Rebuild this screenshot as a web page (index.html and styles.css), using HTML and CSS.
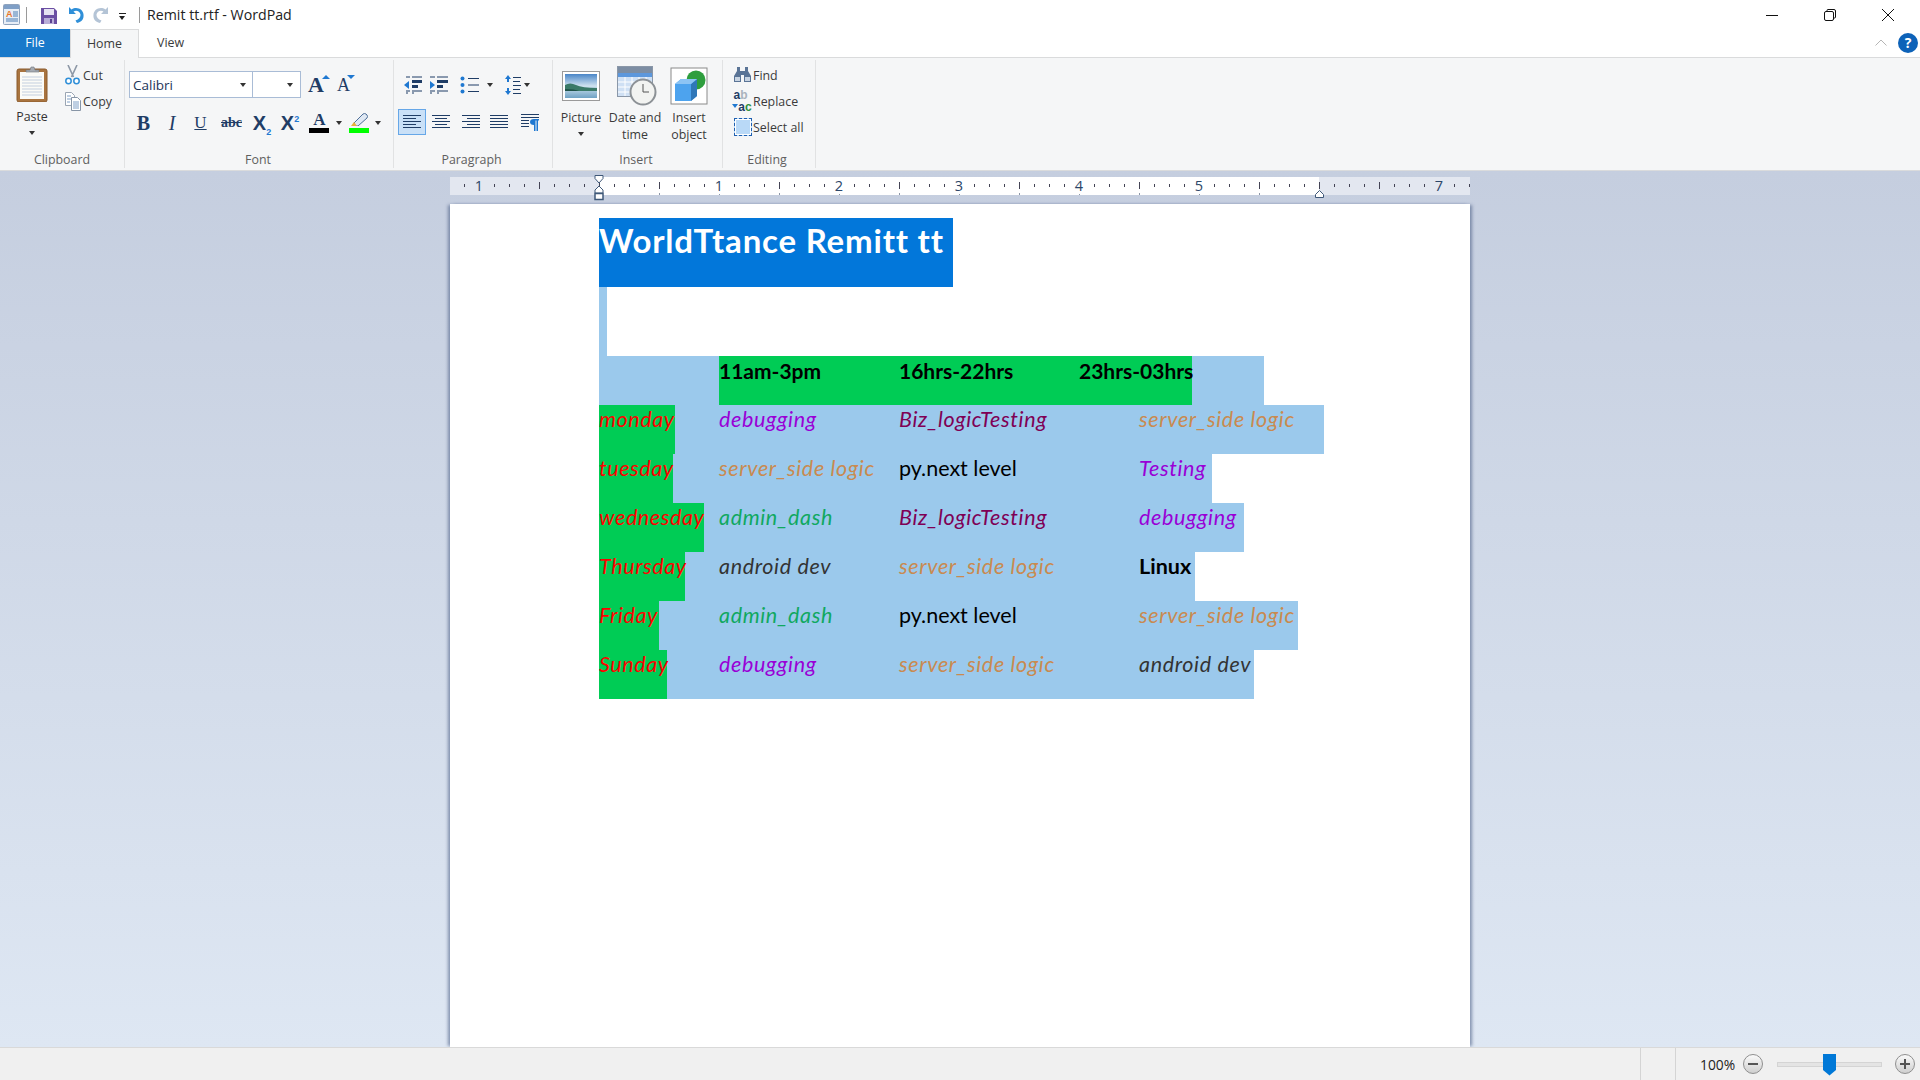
FILE: index.html
```html
<!DOCTYPE html>
<html lang="en">
<head>
    <meta charset="UTF-8">
    <title>Remit tt.rtf - WordPad</title>
    <link rel="stylesheet" href="styles.css">
</head>
<body>

<div class="titlebar">
    <svg class="app-icon" width="17" height="21" viewBox="0 0 17 21">
        <rect x="0.5" y="0.5" width="16" height="20" rx="1" fill="#e8eef6" stroke="#8fa3bd"/>
        <rect x="1" y="1" width="15" height="4" fill="#7f9fc6"/>
        <text x="3" y="13" font-size="9" font-weight="700" fill="#e8782a" font-family="Liberation Sans">A</text>
        <path d="M10 8h5M10 10h5M10 12h5M3 15h12M3 17h12" stroke="#4d7fb5"/>
    </svg>
    <span class="qa-sep"></span>
    <svg class="qa-save" width="16" height="16" viewBox="0 0 16 16">
        <path d="M0 0h13l3 3v13H0z" fill="#6b4fa3"/>
        <rect x="3" y="1" width="10" height="6" fill="#e6e2f2"/>
        <rect x="3" y="10" width="10" height="6" fill="#b9aed8"/>
        <rect x="9" y="11" width="2" height="4" fill="#5a4190"/>
    </svg>
    <svg class="qa-undo" width="16" height="17" viewBox="0 0 16 17">
        <path d="M1 1v7h7L5.500 5.500C8 3.800 12 5 12.500 8.500 12.800 11 11 13.500 7.500 14.500L9 17c5-1 7-4.500 6.500-8.500C15 3.500 9 0 3.500 3.500z" fill="#2f8fd8"/>
    </svg>
    <svg class="qa-redo" width="16" height="17" viewBox="0 0 16 17">
        <path d="M15 1v7H8l2.500-2.500C8 3.800 4 5 3.500 8.500 3.200 11 5 13.500 8.500 14.500L7 17c-5-1-7-4.500-6.500-8.500C1 3.500 7 0 12.500 3.500z" fill="#b4c4d6"/>
    </svg>
    <span class="qa-more"></span>
    <span class="qa-sep qa-sep-last"></span>
    <span class="window-title">Remit tt.rtf - WordPad</span>
    <div class="window-controls">
        <svg width="12" height="12" viewBox="0 0 12 12"><path d="M0 6.500h12" stroke="#111"/></svg>
        <svg width="12" height="12" viewBox="0 0 12 12"><path d="M3 2.500V1.500q0-1 1-1h6q1.500 0 1.500 1.500v6q0 1-1 1h-1" fill="none" stroke="#111"/><rect x="0.500" y="2.500" width="9" height="9" rx="1.500" fill="none" stroke="#111"/></svg>
        <svg width="12" height="12" viewBox="0 0 12 12"><path d="M0 0l12 12M12 0L0 12" stroke="#111"/></svg>
    </div>
</div>

<div class="tabs">
    <span class="tab tab-file">File</span>
    <span class="tab tab-home">Home</span>
    <span class="tab tab-view">View</span>
    <svg class="collapse" width="12" height="7" viewBox="0 0 12 7"><path d="M0.500 6.500L6 1l5.500 5.500" fill="none" stroke="#b5b5b5"/></svg>
    <span class="help">?</span>
</div>

<div class="ribbon">
    <div class="group group-clipboard">
        <div class="group-body clipboard-body">
            <div class="paste">
                <svg width="32" height="36" viewBox="0 0 32 36">
                    <rect x="1" y="3" width="30" height="33" rx="2" fill="#a9743f" stroke="#8a5a2c"/>
                    <rect x="4" y="6" width="24" height="27" fill="#fbfbf7"/>
                    <path d="M6 11h20M6 14h20M6 17h20M6 20h20M6 23h20M6 26h20M6 29h20" stroke="#c3cfdf"/>
                    <path d="M10 6V4h4l1-3h3l1 3h4v2z" fill="#a5abb3" stroke="#6f757d" stroke-width="0.600"/>
                </svg>
                <span class="paste-label">Paste</span>
                <span class="caret"></span>
            </div>
            <div class="small-tools">
                <div class="small-tool">
                    <span class="small-icon">
                        <svg width="15" height="20" viewBox="0 0 15 20">
                            <path d="M3 0l5.500 12M12 0L6.500 12" stroke="#8d98a6" stroke-width="1.600" fill="none"/>
                            <circle cx="3.500" cy="16" r="2.700" fill="#fff" stroke="#2f8fd8" stroke-width="1.500"/>
                            <circle cx="11.500" cy="16" r="2.700" fill="#fff" stroke="#2f8fd8" stroke-width="1.500"/>
                        </svg>
                    </span>
                    Cut
                </div>
                <div class="small-tool">
                    <span class="small-icon">
                        <svg width="16" height="19" viewBox="0 0 16 19">
                            <path d="M0.500 0.500h6l3 3v10h-9z" fill="#fff" stroke="#9aa5b3"/>
                            <path d="M6.500 5.500h6l3 3v10h-9z" fill="#fff" stroke="#8795a6"/>
                            <path d="M2 4h4M2 7h4M2 10h3M8 10h6M8 12h6M8 14h6M8 16h6" stroke="#7f9fc6"/>
                        </svg>
                    </span>
                    Copy
                </div>
            </div>
        </div>
        <div class="group-label">Clipboard</div>
    </div>

    <div class="group group-font">
        <div class="group-body tool-rows">
            <div class="tool-row font-row">
                <span class="select select-name">Calibri<span class="caret"></span></span>
                <span class="select select-size"><span class="caret"></span></span>
                <span class="grow-font">A<i class="wedge wedge-up"></i></span>
                <span class="shrink-font">A<i class="wedge wedge-down"></i></span>
            </div>
            <div class="tool-row format-row">
                <span class="fmt fmt-bold">B</span>
                <span class="fmt fmt-italic">I</span>
                <span class="fmt fmt-under">U</span>
                <span class="fmt fmt-strike">abc</span>
                <span class="fmt fmt-script">X<sub>2</sub></span>
                <span class="fmt fmt-script">X<sup>2</sup></span>
                <span class="fmt fmt-color">A<i class="color-bar bar-black"></i></span>
                <span class="caret caret-tool"></span>
                <span class="fmt fmt-marker">
                    <svg width="19" height="13" viewBox="0 0 19 13"><path d="M4 10L13 1q1.500-1 3 0l1 1q1 1.500 0 3L8 13H4z" fill="#dfe8f3" stroke="#4f6f98"/><path d="M1 13l3-4 3 4z" fill="#e8b23a"/></svg>
                    <i class="color-bar bar-green"></i>
                </span>
                <span class="caret caret-tool"></span>
            </div>
        </div>
        <div class="group-label">Font</div>
    </div>

    <div class="group group-paragraph">
        <div class="group-body tool-rows">
            <div class="tool-row para-row-top">
                <svg class="ic-outdent" width="20" height="18" viewBox="0 0 20 18">
                    <path d="M1 9l5-4v8z" fill="#1f78d1"/>
                    <path d="M3 1h4M3 15h4M3 17h2M9 1h10M9 15h10M9 17h2" stroke="#1f3d66"/>
                    <rect x="9" y="4" width="10" height="3" fill="#1f3d66"/><rect x="9" y="9" width="6" height="3" fill="#1f3d66"/>
                </svg>
                <svg class="ic-indent" width="20" height="18" viewBox="0 0 20 18">
                    <path d="M6 9L1 5v8z" fill="#1f78d1"/>
                    <path d="M1 1h5M1 15h5M1 17h2M8 1h11M8 15h11M8 17h2" stroke="#1f3d66"/>
                    <rect x="8" y="4" width="11" height="3" fill="#1f3d66"/><rect x="8" y="9" width="6" height="3" fill="#1f3d66"/>
                </svg>
                <svg class="ic-bullets" width="19" height="18" viewBox="0 0 19 18">
                    <circle cx="2.500" cy="2.500" r="2" fill="#1f78d1"/><circle cx="2.500" cy="9" r="2" fill="#1f78d1"/><circle cx="2.500" cy="15.500" r="2" fill="#1f78d1"/>
                    <path d="M8 2.500h11M8 9h11M8 15.500h11" stroke="#1f3d66"/>
                </svg>
                <span class="caret caret-bullets"></span>
                <svg class="ic-spacing" width="16" height="20" viewBox="0 0 16 20">
                    <path d="M3 0l3 4H4v3H2V4H0zM3 20l3-4H4v-3H2v3H0z" fill="#1f78d1"/>
                    <path d="M8 2.500h8M8 6.500h7M8 10.500h8M8 14.500h7M8 18.500h8" stroke="#1f3d66"/>
                </svg>
                <span class="caret caret-spacing"></span>
            </div>
            <div class="tool-row para-row-bottom">
                <span class="align-active">
                    <svg width="18" height="16" viewBox="0 0 18 16"><path d="M0 1.500h18M0 4.500h13M0 7.500h18M0 10.500h13M0 13.500h18" stroke="#1f3d66"/></svg>
                </span>
                <svg class="ic-center" width="18" height="16" viewBox="0 0 18 16"><path d="M0 1.500h18M3 4.500h12M0 7.500h18M3 10.500h12M0 13.500h18" stroke="#1f3d66"/></svg>
                <svg class="ic-right" width="18" height="16" viewBox="0 0 18 16"><path d="M0 1.500h18M5 4.500h13M0 7.500h18M5 10.500h13M0 13.500h18" stroke="#1f3d66"/></svg>
                <svg class="ic-justify" width="18" height="16" viewBox="0 0 18 16"><path d="M0 1.500h18M0 4.500h18M0 7.500h18M0 10.500h18M0 13.500h18" stroke="#1f3d66"/></svg>
                <svg class="ic-rtl" width="18" height="18" viewBox="0 0 18 18">
                    <path d="M0 1.500h18M0 4.500h18M0 7.500h8M0 10.500h8M0 13.500h8" stroke="#1f3d66"/>
                    <path d="M13 6h5v1.500h-1V18h-1.500V7.500h-1V18H13v-6q-4 0-4-3t4-3z" fill="#1f78d1"/>
                </svg>
            </div>
        </div>
        <div class="group-label">Paragraph</div>
    </div>

    <div class="group group-insert">
        <div class="group-body insert-body">
            <div class="big-tool">
                <span class="big-icon">
                    <svg width="38" height="30" viewBox="0 0 38 30">
                        <defs><linearGradient id="sky" x1="0" y1="0" x2="0" y2="1"><stop offset="0" stop-color="#4a86c8"/><stop offset="0.500" stop-color="#cfe2ef"/><stop offset="1" stop-color="#6fa2c4"/></linearGradient></defs>
                        <rect x="0.500" y="0.500" width="37" height="29" fill="#fff" stroke="#9a9a9a"/>
                        <rect x="3" y="3" width="32" height="24" fill="url(#sky)"/>
                        <path d="M3 14q5-3 11 0t21 3v3H3z" fill="#3a7a68"/>
                        <path d="M3 18q10 0 14 2h-14z" fill="#1f5248"/>
                    </svg>
                </span>
                <span class="big-label">Picture</span>
                <span class="caret"></span>
            </div>
            <div class="big-tool">
                <span class="big-icon big-icon-date">
                    <svg width="40" height="40" viewBox="0 0 40 40">
                        <rect x="0.500" y="0.500" width="35" height="30" fill="#cfe0f4" stroke="#8a97a8"/>
                        <rect x="1" y="1" width="34" height="6" fill="#7c8da3"/>
                        <rect x="1" y="7" width="34" height="4" fill="#5c97dc"/>
                        <path d="M1 16h34M1 21h34M1 26h34M8 11v19M15 11v19M22 11v19M29 11v19" stroke="#fff"/>
                        <circle cx="26" cy="26" r="12.500" fill="#f2f3f1" stroke="#8c9196" stroke-width="2"/>
                        <path d="M26 18v8h6" fill="none" stroke="#555"/>
                    </svg>
                </span>
                <span class="big-label">Date and<br>time</span>
            </div>
            <div class="big-tool">
                <span class="big-icon">
                    <svg width="38" height="38" viewBox="0 0 38 38">
                        <rect x="1" y="1" width="36" height="36" fill="#fff" stroke="#8a8a8a"/>
                        <circle cx="26" cy="13" r="9.500" fill="#2e9e3e"/>
                        <path d="M5 17l6-5h16v17l-6 5H5z" fill="#4da3ee"/>
                        <path d="M21 17l6-5v17l-6 5z" fill="#2f77b8"/>
                        <path d="M5 17l6-5h16l-6 5z" fill="#8cc4f4"/>
                    </svg>
                </span>
                <span class="big-label">Insert<br>object</span>
            </div>
        </div>
        <div class="group-label">Insert</div>
    </div>

    <div class="group group-editing">
        <div class="group-body editing-body">
            <div class="small-tool">
                <span class="small-icon">
                    <svg width="19" height="16" viewBox="0 0 19 16">
                        <path d="M4 0h3v4h5V0h3v4l3 5v6h-7V8H8v7H1V9l3-5z" fill="#5a7496"/>
                        <rect x="2" y="10" width="5" height="4" fill="#c8d4e2"/><rect x="12" y="10" width="5" height="4" fill="#c8d4e2"/>
                    </svg>
                </span>
                Find
            </div>
            <div class="small-tool">
                <span class="small-icon replace-icon">
                    <span class="rep-top"><b>a</b><i>b</i></span>
                    <span class="rep-bottom"><b>a</b><em>c</em></span>
                </span>
                Replace
            </div>
            <div class="small-tool">
                <span class="small-icon">
                    <span class="select-all"></span>
                </span>
                Select all
            </div>
        </div>
        <div class="group-label">Editing</div>
    </div>
</div>

<div class="workspace">
    <div class="ruler">
        <div class="ruler-part ruler-left"></div>
        <div class="ruler-part ruler-middle"></div>
        <div class="ruler-part ruler-right"></div>
        <div class="ruler-numbers">
            <span><b>1</b></span><span></span><span><b class="on">1</b></span><span><b class="on">2</b></span><span><b class="on">3</b></span><span><b class="on">4</b></span><span><b class="on">5</b></span><span></span><span><b>7</b></span>
        </div>
        <svg class="indent-left" width="11" height="26" viewBox="0 0 11 26">
            <path d="M1 0.500h8v3L5 8 1 3.500z" fill="#fff" stroke="#3f5878"/>
            <path d="M5 11l4 4v3H1v-3z" fill="#fff" stroke="#3f5878"/>
            <rect x="1" y="18.500" width="8" height="6" fill="#fff" stroke="#3f5878" stroke-width="1.500"/>
        </svg>
        <svg class="indent-right" width="9" height="8" viewBox="0 0 9 8"><path d="M4.500 0.500l4 4v3h-8v-3z" fill="#fff" stroke="#3f5878"/></svg>
    </div>

    <div class="page">
        <div class="doc-title">WorldTtance Remitt tt</div>
        <div class="doc-gap"></div>

        <div class="doc-row row-head">
            <span class="head-green">
                <span class="c-head">11am-3pm</span>
                <span class="c-head">16hrs-22hrs</span>
                <span class="c-head c-head-last">23hrs-03hrs</span>
            </span>
        </div>
        <div class="doc-row row-mon">
            <span class="day-cell"><span class="day">monday</span></span>
            <span class="c1 t-debug">debugging</span>
            <span class="c2 t-biz">Biz_logicTesting</span>
            <span class="c3 t-server">server_side logic</span>
        </div>
        <div class="doc-row row-tue">
            <span class="day-cell"><span class="day">tuesday</span></span>
            <span class="c1 t-server">server_side logic</span>
            <span class="c2 t-py">py.next level</span>
            <span class="c3 t-debug">Testing</span>
        </div>
        <div class="doc-row row-wed">
            <span class="day-cell"><span class="day">wednesday</span></span>
            <span class="c1 t-admin">admin_dash</span>
            <span class="c2 t-biz">Biz_logicTesting</span>
            <span class="c3 t-debug">debugging</span>
        </div>
        <div class="doc-row row-thu">
            <span class="day-cell"><span class="day">Thursday</span></span>
            <span class="c1 t-android">android dev</span>
            <span class="c2 t-server">server_side logic</span>
            <span class="c3 t-linux">Linux</span>
        </div>
        <div class="doc-row row-fri">
            <span class="day-cell"><span class="day">Friday</span></span>
            <span class="c1 t-admin">admin_dash</span>
            <span class="c2 t-py">py.next level</span>
            <span class="c3 t-server">server_side logic</span>
        </div>
        <div class="doc-row row-sun">
            <span class="day-cell"><span class="day">Sunday</span></span>
            <span class="c1 t-debug">debugging</span>
            <span class="c2 t-server">server_side logic</span>
            <span class="c3 t-android">android dev</span>
        </div>
    </div>
</div>

<div class="statusbar">
    <span class="status-sep"></span>
    <span class="status-sep status-sep-two"></span>
    <span class="zoom-value">100%</span>
    <span class="zoom-btn">
        <svg width="10" height="2" viewBox="0 0 10 2"><rect width="10" height="2" fill="#555"/></svg>
    </span>
    <span class="zoom-track"><span class="zoom-thumb"></span></span>
    <span class="zoom-btn zoom-plus">
        <svg width="10" height="10" viewBox="0 0 10 10"><path d="M0 4h10v2H0zM4 0h2v10H4z" fill="#555"/></svg>
    </span>
</div>

</body>
</html>
```

FILE: styles.css
```css
* {
    box-sizing: border-box;
}
html, body {
    margin: 0;
    height: 100%;
}
body {
    width: 1920px;
    height: 1080px;
    overflow: hidden;
    display: flex;
    flex-direction: column;
    font-family: "Open Sans", sans-serif;
    font-size: 12.4px;
    color: #333;
    background: #fff;
}
svg {
    display: block;
    flex: none;
}

/* title bar */
.titlebar {
    height: 29px;
    display: flex;
    align-items: center;
    background: #fff;
    flex: none;
}
.app-icon {
    margin: 0 0 0 3px;
}
.qa-sep {
    width: 1px;
    height: 16px;
    background: #9a9a9a;
    margin-left: 6px;
}
.qa-save {
    margin-left: 14px;
    margin-top: 2px;
}
.qa-undo {
    margin-left: 11px;
}
.qa-redo {
    margin-left: 9px;
}
.qa-more {
    width: 7px;
    height: 7px;
    margin-left: 10px;
    margin-top: 3px;
    border-top: 1px solid #222;
    position: relative;
}
.qa-more::after {
    content: "";
    position: absolute;
    top: 2px;
    left: 0;
    border: 3.5px solid transparent;
    border-top: 4px solid #222;
}
.qa-sep-last {
    margin-left: 13px;
}
.window-title {
    margin-left: 7px;
    font-size: 14.2px;
    color: #222;
}
.window-controls {
    margin-left: auto;
    display: flex;
    gap: 46px;
    padding-right: 26px;
}

/* tabs */
.tabs {
    height: 29px;
    display: flex;
    align-items: flex-end;
    flex: none;
    background: #fff;
    position: relative;
    border-bottom: 1px solid #dadbdc;
}
.tab {
    height: 28px;
    line-height: 27px;
    text-align: center;
}
.tab-file {
    width: 70px;
    background: #1979ca;
    color: #fff;
}
.tab-home {
    width: 69px;
    background: #f5f6f7;
    border: 1px solid #dadbdc;
    border-bottom: none;
    height: 29px;
    margin-bottom: -1px;
    color: #3b3b3b;
}
.tab-view {
    margin-left: 18px;
    color: #3b3b3b;
}
.collapse {
    position: absolute;
    right: 33px;
    top: 10px;
}
.help {
    position: absolute;
    right: 2px;
    top: 4px;
    width: 20px;
    height: 20px;
    border-radius: 50%;
    background: #0d62b8;
    color: #fff;
    font-weight: 700;
    font-size: 14px;
    line-height: 20px;
    text-align: center;
}

/* ribbon */
.ribbon {
    height: 113px;
    flex: none;
    display: flex;
    padding-top: 2px;
    background: #f5f6f7;
    border-bottom: 1px solid #dadbdc;
}
.group {
    height: 108px;
    border-right: 1px solid #e1e2e3;
    display: flex;
    flex-direction: column;
    flex: none;
}
.group-body {
    height: 91px;
    flex: none;
}
.group-label {
    height: 17px;
    line-height: 17px;
    text-align: center;
    color: #5f5f5f;
}
.group-clipboard { width: 125px; }
.group-font { width: 269px; }
.group-font .group-label { padding-right: 2px; }
.group-paragraph { width: 159px; }
.group-paragraph .group-label { padding-right: 3px; }
.group-insert { width: 170px; }
.group-insert .group-label { padding-right: 3px; }
.group-editing { width: 93px; }
.group-editing .group-label { padding-right: 4px; }

.caret {
    display: block;
    width: 0;
    height: 0;
    border: 3.5px solid transparent;
    border-top: 4px solid #333;
    border-bottom: none;
}
.clipboard-body {
    display: flex;
}
.paste {
    width: 36px;
    margin: 6px 0 0 14px;
    display: flex;
    flex-direction: column;
    align-items: center;
}
.paste-label {
    margin-top: 6px;
    line-height: 17px;
}
.paste .caret {
    margin-top: 6px;
}
.small-tools {
    margin: 2px 0 0 12px;
}
.small-tool {
    height: 26px;
    display: flex;
    align-items: center;
    color: #3b3b3b;
}
.small-icon {
    width: 21px;
    display: flex;
    align-items: center;
    justify-content: center;
}

/* font group */
.tool-rows {
    padding-top: 11px;
}
.tool-row {
    display: flex;
    align-items: center;
}
.font-row {
    padding-left: 4px;
    height: 27px;
}
.select {
    height: 27px;
    background: #fff;
    border: 1px solid #a9bcd6;
    display: flex;
    align-items: center;
    justify-content: space-between;
    padding: 0 6px 0 3px;
    font-size: 13.5px;
    color: #1d3557;
}
.select-name {
    width: 124px;
}
.select-size {
    width: 49px;
    margin-left: -1px;
    justify-content: flex-end;
    padding-right: 7px;
}
.grow-font, .shrink-font {
    font-family: "Liberation Serif", serif;
    font-weight: 700;
    color: #1f3d66;
    position: relative;
    line-height: 20px;
}
.grow-font {
    font-size: 22px;
    margin-left: 7px;
    width: 22px;
}
.shrink-font {
    font-size: 18px;
    margin-left: 7px;
    width: 18px;
    font-weight: 400;
}
.wedge {
    position: absolute;
    top: 0;
    left: 14px;
    border: 4px solid transparent;
}
.wedge-up {
    border-bottom: 4px solid #1f78d1;
    border-top: none;
}
.wedge-down {
    border-top: 4px solid #1f78d1;
    border-bottom: none;
    left: 10px;
}
.format-row {
    height: 26px;
    margin-top: 12px;
    padding-left: 4px;
}
.fmt {
    width: 29px;
    text-align: center;
    font-family: "Liberation Serif", serif;
    color: #1f3d66;
    line-height: 22px;
    position: relative;
    flex: none;
}
.fmt-bold { font-weight: 700; font-size: 20px; }
.fmt-italic { font-style: italic; font-size: 20px; width: 28px; }
.fmt-under { text-decoration: underline; font-size: 17px; }
.fmt-strike { text-decoration: line-through; font-size: 14px; font-weight: 700; width: 33px; }
.fmt-script {
    font-family: "Liberation Sans", sans-serif;
    font-weight: 700;
    font-size: 20px;
    width: 28px;
}
.fmt-script sub, .fmt-script sup {
    font-size: 9px;
    color: #1f78d1;
    line-height: 0;
}
.fmt-color {
    font-size: 17px;
    width: 31px;
    font-weight: 700;
    line-height: 14px;
    height: 20px;
}
.color-bar {
    position: absolute;
    bottom: 0;
    left: 5px;
    width: 20px;
    height: 5px;
}
.bar-black { background: #000; }
.bar-green { background: #00ff00; }
.caret-tool {
    margin: 0 1px;
}
.fmt-marker {
    height: 20px;
    width: 30px;
    margin-left: 1px;
}
.fmt-marker svg {
    margin-left: 6px;
}

/* paragraph group */
.para-row-top {
    height: 26px;
    margin-top: 1px;
}
.ic-outdent { margin-left: 9px; }
.ic-indent { margin-left: 6px; }
.ic-bullets { margin-left: 11px; }
.caret-bullets { margin-left: 8px; }
.ic-spacing { margin-left: 12px; }
.caret-spacing { margin-left: 3px; }
.para-row-bottom {
    height: 26px;
    margin-top: 11px;
}
.align-active {
    width: 28px;
    height: 26px;
    margin-left: 4px;
    background: #c9e0f7;
    border: 1px solid #66a7e8;
    display: flex;
    align-items: center;
    justify-content: center;
}
.ic-center { margin-left: 6px; }
.ic-right { margin-left: 12px; }
.ic-justify { margin-left: 10px; }
.ic-rtl { margin-left: 13px; }

/* insert group */
.insert-body {
    display: flex;
    padding-left: 1px;
}
.big-tool {
    width: 54px;
    display: flex;
    flex-direction: column;
    align-items: center;
    text-align: center;
    color: #3b3b3b;
}
.big-icon {
    height: 49px;
    display: flex;
    align-items: center;
    justify-content: center;
    padding-top: 2px;
}
.big-icon-date {
    padding-left: 3px;
}
.big-label {
    line-height: 17px;
    white-space: nowrap;
}
.big-tool .caret {
    margin-top: 6px;
}

/* editing group */
.editing-body {
    padding: 2px 0 0 9px;
}
.replace-icon {
    flex-direction: column;
    font-family: "Liberation Sans", sans-serif;
    font-size: 12px;
    font-weight: 700;
    line-height: 12px;
    height: 24px;
}
.rep-top {
    margin-right: 4px;
}
.rep-top b { color: #1f3d66; }
.rep-top i { color: #aab3bd; font-style: normal; }
.rep-bottom {
    margin-left: 5px;
    position: relative;
}
.rep-bottom::before {
    content: "";
    position: absolute;
    left: -6px;
    top: 3px;
    border: 3px solid transparent;
    border-top: 4px solid #1f78d1;
    border-bottom: none;
}
.rep-bottom b { color: #1f3d66; }
.rep-bottom em { color: #2f8f3f; font-style: normal; }
.select-all {
    width: 18px;
    height: 18px;
    display: block;
    border: 1px dashed #1f5fb0;
    background: #b9d9f7;
    box-shadow: inset 0 0 0 1px #fff;
}

/* workspace and ruler */
.workspace {
    flex: 1;
    min-height: 0;
    background: linear-gradient(#c5cedf, #dee7f3);
    padding: 6px 0 0 450px;
    display: flex;
    flex-direction: column;
}
.ruler {
    width: 1020px;
    height: 18px;
    display: flex;
    position: relative;
    flex: none;
}
.ruler-part {
    background-repeat: no-repeat;
}
.ruler-left, .ruler-right {
    background-color: #e3e7f0;
}
.ruler-middle {
    background-color: #fff;
    box-shadow: 1px 0 0 #5a6f8c;
}
.ruler-left {
    width: 149px;
    background-image:
        repeating-linear-gradient(90deg, transparent 0 14px, #445 14px 15px),
        repeating-linear-gradient(90deg, transparent 0 29px, #445 29px 30px, transparent 30px 60px);
    background-size: 100% 3px, 100% 7px;
    background-position: 0 7px, 0 5px;
}
.ruler-middle {
    width: 720px;
    background-image:
        repeating-linear-gradient(90deg, #445 0 1px, transparent 1px 15px),
        repeating-linear-gradient(90deg, #445 0 1px, transparent 1px 60px),
        repeating-linear-gradient(90deg, #8c96a8 0 1px, transparent 1px 60px);
    background-size: 100% 3px, 100% 7px, 100% 2px;
    background-position: 0 7px, 0 5px, 0 16px;
}
.ruler-right {
    width: 151px;
    background-image:
        repeating-linear-gradient(90deg, #445 0 1px, transparent 1px 15px),
        repeating-linear-gradient(90deg, #445 0 1px, transparent 1px 60px);
    background-size: 100% 3px, 100% 7px;
    background-position: 0 7px, 0 5px;
}
.ruler-numbers {
    position: absolute;
    inset: 0;
    display: flex;
    margin-left: -31px;
    height: 16px;
    line-height: 16px;
    font-size: 14.5px;
    color: #2c4668;
}
.ruler-numbers span {
    width: 120px;
    flex: none;
    text-align: center;
}
.ruler-numbers b {
    display: inline-block;
    height: 16px;
    margin-top: 1px;
    font-weight: 400;
    background: #e3e7f0;
    padding: 0 2px;
}
.ruler-numbers b.on {
    background: #fff;
}
.indent-left {
    position: absolute;
    left: 144px;
    top: -2px;
}
.indent-right {
    position: absolute;
    left: 865px;
    top: 13px;
}

/* document page */
.page {
    flex: 1;
    width: 1020px;
    background: #fff;
    margin-top: 9px;
    padding: 14px 0 0 149px;
    box-shadow: -3px 0 3px -1px rgba(70, 90, 130, 0.6), 3px 0 3px -1px rgba(70, 90, 130, 0.6);
    font-family: Lato, sans-serif;
    font-size: 21.5px;
}
.doc-title {
    width: 354px;
    height: 69px;
    background: #0277da;
    color: #fff;
    font-size: 33px;
    letter-spacing: 0.8px;
    font-weight: 700;
    line-height: 45px;
    white-space: nowrap;
}
.doc-gap {
    width: 8px;
    height: 69px;
    background: #9bc9ec;
}
.doc-row {
    height: 49px;
    display: flex;
    background: #9bc9ec;
    line-height: 30px;
    white-space: nowrap;
}
.row-head { width: 665px; padding-left: 120px; }
.row-mon { width: 725px; }
.row-tue { width: 613px; }
.row-wed { width: 645px; }
.row-thu { width: 596px; }
.row-fri { width: 699px; }
.row-sun { width: 655px; }
.head-green {
    width: 473px;
    background: #00cc55;
    display: flex;
    color: #000;
    font-size: 21px;
    font-weight: 700;
    height: 49px;
    line-height: 29px;
}
.c-head { width: 180px; flex: none; }
.c-head-last { width: 113px; }
.day-cell {
    width: 120px;
    flex: none;
}
.day {
    display: block;
    height: 49px;
    background: #00cc55;
    color: #f00;
    font-style: italic;
    letter-spacing: 0.6px;
    line-height: 29px;
}
.row-mon .day { width: 76px; }
.row-tue .day { width: 74px; }
.row-wed .day { width: 105px; }
.row-thu .day { width: 86px; }
.row-fri .day { width: 60px; }
.row-sun .day { width: 68px; }
.c1, .c2, .c3 {
    flex: none;
    font-style: italic;
    letter-spacing: 0.65px;
    line-height: 29px;
}
.c1 { width: 180px; }
.c2 { width: 240px; }
.t-debug { color: #9900d6; }
.t-biz { color: #7f0055; }
.t-server { color: #c98a50; }
.t-admin { color: #10a860; }
.t-android { color: #333; }
.t-py { color: #000; font-style: normal; letter-spacing: 0; }
.t-linux { color: #000; font-style: normal; font-weight: 700; letter-spacing: 0; }

/* status bar */
.statusbar {
    height: 33px;
    flex: none;
    background: #f0f0f0;
    border-top: 1px solid #d9d9d9;
    display: flex;
    align-items: center;
}
.status-sep {
    width: 1px;
    height: 32px;
    background: #d4d4d4;
    margin-left: 1640px;
}
.status-sep-two {
    margin-left: 34px;
}
.zoom-value {
    margin-left: 24px;
    width: 35px;
    font-size: 13.8px;
    color: #222;
}
.zoom-btn {
    width: 20px;
    height: 20px;
    margin-left: 8px;
    border-radius: 50%;
    border: 1px solid #8f8f8f;
    background: linear-gradient(#fafafa, #cfcfcf);
    display: flex;
    align-items: center;
    justify-content: center;
    flex: none;
}
.zoom-track {
    width: 105px;
    height: 5px;
    margin-left: 14px;
    background: #e4e4e4;
    border: 1px solid #d4d4d4;
    position: relative;
    flex: none;
}
.zoom-thumb {
    position: absolute;
    left: 45px;
    top: -9px;
    width: 13px;
    height: 22px;
    background: #0078d7;
    clip-path: polygon(0 0, 100% 0, 100% 75%, 50% 100%, 0 75%);
}
.zoom-plus {
    margin-left: 13px;
}
```
